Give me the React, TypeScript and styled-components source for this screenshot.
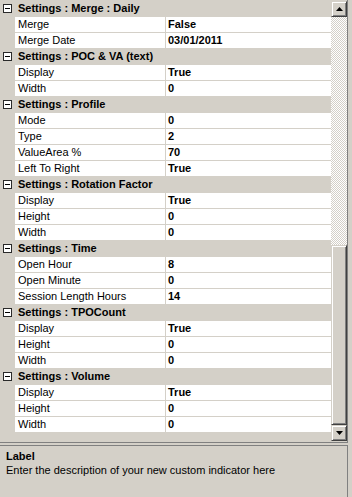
import { ReactElement } from "react";
import styled, { createGlobalStyle } from "styled-components";

type Prop = { label: string; value: string };
type Category = { title: string; props: Prop[] };

const categories: Category[] = [
    {
        title: "Settings : Merge : Daily",
        props: [
            { label: "Merge", value: "False" },
            { label: "Merge Date", value: "03/01/2011" },
        ],
    },
    {
        title: "Settings : POC & VA (text)",
        props: [
            { label: "Display", value: "True" },
            { label: "Width", value: "0" },
        ],
    },
    {
        title: "Settings : Profile",
        props: [
            { label: "Mode", value: "0" },
            { label: "Type", value: "2" },
            { label: "ValueArea %", value: "70" },
            { label: "Left To Right", value: "True" },
        ],
    },
    {
        title: "Settings : Rotation Factor",
        props: [
            { label: "Display", value: "True" },
            { label: "Height", value: "0" },
            { label: "Width", value: "0" },
        ],
    },
    {
        title: "Settings : Time",
        props: [
            { label: "Open Hour", value: "8" },
            { label: "Open Minute", value: "0" },
            { label: "Session Length Hours", value: "14" },
        ],
    },
    {
        title: "Settings : TPOCount",
        props: [
            { label: "Display", value: "True" },
            { label: "Height", value: "0" },
            { label: "Width", value: "0" },
        ],
    },
    {
        title: "Settings : Volume",
        props: [
            { label: "Display", value: "True" },
            { label: "Height", value: "0" },
            { label: "Width", value: "0" },
        ],
    },
];

const GlobalStyle = createGlobalStyle`
    body {
        margin: 0;
        background: #d4d0c8;
        font-family: "Liberation Sans", Arial, sans-serif;
        font-size: 11px;
        color: #000;
    }
`;

function Collapse(): ReactElement {
    return (
        <svg width="9" height="9" viewBox="0 0 9 9">
            <rect x="0.5" y="0.5" width="8" height="8" fill="#fff" stroke="#2a2a2a" />
            <line x1="2" y1="4.5" x2="7" y2="4.5" stroke="#000" />
        </svg>
    );
}

function Arrow({ down }: { down?: boolean }): ReactElement {
    return (
        <svg width="7" height="4" viewBox="0 0 7 4">
            {down ? <polygon points="0,0 7,0 3.5,4" fill="#000" /> : <polygon points="0,4 7,4 3.5,0" fill="#000" />}
        </svg>
    );
}

export default function App(): ReactElement {
    return (
        <Window>
            <GlobalStyle />
            <GridFrame>
                <Rows>
                    {categories.map((cat) => (
                        <div key={cat.title}>
                            <CategoryRow>
                                <Expander>
                                    <Collapse />
                                </Expander>
                                <CategoryTitle>{cat.title}</CategoryTitle>
                            </CategoryRow>
                            {cat.props.map((p) => (
                                <PropRow key={cat.title + p.label}>
                                    <Margin />
                                    <LabelCell>{p.label}</LabelCell>
                                    <Splitter />
                                    <ValueCell>{p.value}</ValueCell>
                                </PropRow>
                            ))}
                        </div>
                    ))}
                </Rows>
                <ScrollBar>
                    <ScrollButton>
                        <Arrow />
                    </ScrollButton>
                    <Track $size={228} />
                    <Thumb $size={180} />
                    <ScrollButton>
                        <Arrow down />
                    </ScrollButton>
                </ScrollBar>
            </GridFrame>
            <DescPanel>
                <DescTitle>Label</DescTitle>
                <DescText>Enter the description of your new custom indicator here</DescText>
            </DescPanel>
        </Window>
    );
}

const Window = styled.div`
    width: 352px;
    height: 497px;
    display: flex;
    flex-direction: column;
    overflow: hidden;
    background: #d4d0c8;
`;

const GridFrame = styled.div`
    width: 348px;
    height: 443px;
    box-sizing: border-box;
    display: flex;
    border-right: 1px solid #808080;
    border-bottom: 1px solid #808080;
`;

const Rows = styled.div`
    width: 331px;
    padding-top: 1px;
    background: #d4d0c8;
`;

const CategoryRow = styled.div`
    height: 16px;
    box-sizing: border-box;
    display: flex;
    align-items: center;
    background: #d4d0c8;
    border-bottom: 1px solid #d4d0c8;
`;

const Expander = styled.div`
    width: 18px;
    padding-left: 3px;
    box-sizing: border-box;
    display: flex;
    align-items: center;
    height: 15px;
`;

const CategoryTitle = styled.span`
    font-weight: bold;
    white-space: nowrap;
    line-height: 15px;
`;

const PropRow = styled.div`
    height: 16px;
    box-sizing: border-box;
    display: grid;
    grid-template-columns: 15px 150px 1px 1fr;
    border-bottom: 1px solid #d4d0c8;
    line-height: 15px;
`;

const Margin = styled.div`
    background: #d4d0c8;
`;

const LabelCell = styled.div`
    background: #fff;
    padding-left: 3px;
    white-space: nowrap;
    overflow: hidden;
`;

const Splitter = styled.div`
    background: #d4d0c8;
`;

const ValueCell = styled.div`
    background: #fff;
    padding-left: 2px;
    font-weight: bold;
    white-space: nowrap;
`;

const ScrollBar = styled.div`
    width: 16px;
    margin-top: 1px;
    display: flex;
    flex-direction: column;
`;

const ScrollButton = styled.div`
    width: 16px;
    height: 16px;
    box-sizing: border-box;
    display: flex;
    align-items: center;
    justify-content: center;
    background: #d4d0c8;
    border: 1px solid;
    border-color: #d4d0c8 #404040 #404040 #d4d0c8;
    box-shadow: inset 1px 1px #fff, inset -1px -1px #808080;
`;

const Track = styled.div<{ $size: number }>`
    height: ${(p) => p.$size}px;
    background-color: #d4d0c8;
    background-image: repeating-conic-gradient(#fff 0 25%, #d4d0c8 0 50%);
    background-size: 2px 2px;
`;

const Thumb = styled(ScrollButton)<{ $size: number }>`
    height: ${(p) => p.$size}px;
`;

const DescPanel = styled.div`
    width: 348px;
    flex: 1;
    margin-top: 2px;
    box-sizing: border-box;
    padding: 3px 6px;
    border-top: 1px solid #808080;
    border-right: 1px solid #808080;
    line-height: 14px;
`;

const DescTitle = styled.div`
    font-weight: bold;
`;

const DescText = styled.div``;
